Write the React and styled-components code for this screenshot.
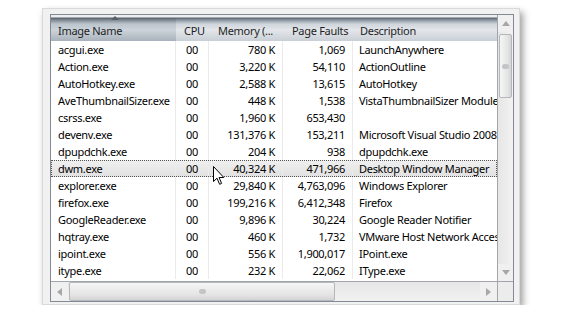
import React from 'react';
import styled, { createGlobalStyle } from 'styled-components';

const GlobalStyle = createGlobalStyle`
  html, body {
    margin: 0;
    background: #ffffff;
  }
  body {
    font-family: "Noto Sans", "Open Sans", sans-serif;
    font-size: 11px;
    letter-spacing: -0.3px;
    color: #000;
  }
`;

const columns = [
  { key: 'name', title: 'Image Name', width: 125, align: 'left', sorted: true },
  { key: 'cpu', title: 'CPU', width: 33, align: 'center' },
  { key: 'mem', title: 'Memory (...', width: 74, align: 'right' },
  { key: 'faults', title: 'Page Faults', width: 70, align: 'right' },
  { key: 'desc', title: 'Description', width: 144, align: 'left' },
];

const rows = [
  ['acgui.exe', '00', '780 K', '1,069', 'LaunchAnywhere'],
  ['Action.exe', '00', '3,220 K', '54,110', 'ActionOutline'],
  ['AutoHotkey.exe', '00', '2,588 K', '13,615', 'AutoHotkey'],
  ['AveThumbnailSizer.exe', '00', '448 K', '1,538', 'VistaThumbnailSizer Module'],
  ['csrss.exe', '00', '1,960 K', '653,430', ''],
  ['devenv.exe', '00', '131,376 K', '153,211', 'Microsoft Visual Studio 2008'],
  ['dpupdchk.exe', '00', '204 K', '938', 'dpupdchk.exe'],
  ['dwm.exe', '00', '40,324 K', '471,966', 'Desktop Window Manager'],
  ['explorer.exe', '00', '29,840 K', '4,763,096', 'Windows Explorer'],
  ['firefox.exe', '00', '199,216 K', '6,412,348', 'Firefox'],
  ['GoogleReader.exe', '00', '9,896 K', '30,224', 'Google Reader Notifier'],
  ['hqtray.exe', '00', '460 K', '1,732', 'VMware Host Network Access'],
  ['ipoint.exe', '00', '556 K', '1,900,017', 'IPoint.exe'],
  ['itype.exe', '00', '232 K', '22,062', 'IType.exe'],
];

const gridCols = columns.map((c) => `${c.width}px`).join(' ');

const App = () => {
  return (
    <>
      <GlobalStyle />
      <Page>
        <Frame>
          <ListView>
            <Table>
              <HeaderRow>
                {columns.map((col) => (
                  <HeaderCell key={col.key} $sorted={col.sorted} $align={col.align}>
                    {col.sorted && <SortArrow />}
                    {col.title}
                  </HeaderCell>
                ))}
              </HeaderRow>
              <Body>
                {rows.map((row, i) => (
                  <Row key={row[0]} $selected={i === 7}>
                    {row.map((val, j) => (
                      <Cell key={j} $align={columns[j].align}>
                        {val}
                      </Cell>
                    ))}
                  </Row>
                ))}
                <Pointer viewBox="0 0 12 19" width="12" height="19">
                  <path
                    d="M0.5 0.5 L0.5 15.5 L4 12.2 L6.6 18.3 L8.6 17.4 L6.1 11.5 L10.8 11.5 Z"
                    fill="#fff"
                    stroke="#000"
                    strokeWidth="1"
                    strokeLinejoin="miter"
                  />
                </Pointer>
              </Body>
            </Table>

            <VScroll>
              <ScrollButton $v>
                <Arrow dir="up" />
              </ScrollButton>
              <VTrack>
                <VThumb>
                  <Grip />
                </VThumb>
              </VTrack>
              <ScrollButton $v>
                <Arrow dir="down" />
              </ScrollButton>
            </VScroll>

            <HScroll>
              <ScrollButton>
                <Arrow dir="left" />
              </ScrollButton>
              <HTrack>
                <HThumb>
                  <Grip />
                </HThumb>
              </HTrack>
              <ScrollButton>
                <Arrow dir="right" />
              </ScrollButton>
            </HScroll>
            <Corner />
          </ListView>
        </Frame>
      </Page>
    </>
  );
};

const Arrow = ({ dir }) => {
  const points = {
    up: '0,5 4,0 8,5',
    down: '0,0 8,0 4,5',
    left: '5,0 5,8 0,4',
    right: '0,0 0,8 5,4',
  }[dir];
  const vertical = dir === 'up' || dir === 'down';
  return (
    <svg width={vertical ? 8 : 5} height={vertical ? 5 : 8}>
      <polygon points={points} fill="#a7a7a7" />
    </svg>
  );
};

const Page = styled.div`
  padding: 8px 0 0 42px;
`;

const Frame = styled.div`
  width: 478px;
  height: 297px;
  box-sizing: border-box;
  background: #f1f1f1;
  border: 1px solid #d9d9d9;
  padding: 5px 5px 2px 7px;
  box-shadow: 3px 4px 7px rgba(0, 0, 0, 0.38);
`;

const ListView = styled.div`
  display: grid;
  grid-template-columns: 446px 16px;
  grid-template-rows: 266px 20px;
  border: 1px solid #838a93;
  background: #fff;
  overflow: hidden;
`;

const Table = styled.div`
  display: flex;
  flex-direction: column;
  overflow: hidden;
`;

const HeaderRow = styled.div`
  display: grid;
  grid-template-columns: ${gridCols};
  height: 26px;
  flex: none;
`;

const HeaderCell = styled.div`
  position: relative;
  display: flex;
  align-items: center;
  padding: 4px 0 0 ${(p) => (p.$align === 'center' ? 8 : p.$sorted ? 7 : 9)}px;
  white-space: nowrap;
  overflow: hidden;
  color: #1e1e1e;
  background: ${(p) =>
    p.$sorted
      ? 'linear-gradient(#eceef0 0px, #eceef0 2px, #58616b 3px, #7f8993 5px, #bcc4cc 9px, #ccd3da 15px, #a9b2bc 26px)'
      : 'linear-gradient(#eceef0 0px, #eceef0 2px, #5c6670 3px, #8a939d 5px, #cfd5db 9px, #e3e6ea 15px, #c9cfd6 26px)'};
  &:last-child {
    padding-left: 7px;
  }
`;

const SortArrow = styled.span`
  position: absolute;
  top: 1px;
  left: 60px;
  width: 0;
  height: 0;
  border-left: 4px solid transparent;
  border-right: 4px solid transparent;
  border-bottom: 4px solid #5a5f66;
`;

const Body = styled.div`
  position: relative;
  flex: 1;
`;

const Row = styled.div`
  display: grid;
  grid-template-columns: ${gridCols};
  height: 17px;
  box-sizing: border-box;
  background: ${(p) => (p.$selected ? 'linear-gradient(#f0f0f0, #e1e1e1)' : 'transparent')};
  outline: ${(p) => (p.$selected ? '1px dotted #555' : 'none')};
  outline-offset: -1px;
`;

const Cell = styled.div`
  padding: 0 7px;
  line-height: 17px;
  white-space: nowrap;
  overflow: hidden;
  text-align: ${(p) => p.$align};
  border-right: 1px solid #ebebeb;
  &:last-child {
    border-right: none;
    padding: 0 0 0 6px;
  }
`;

const Pointer = styled.svg`
  position: absolute;
  left: 162px;
  top: 125px;
`;

const VScroll = styled.div`
  grid-row: 1;
  grid-column: 2;
  display: flex;
  flex-direction: column;
  background: #ececec;
  border-left: 1px solid #a2a6ab;
`;

const HScroll = styled.div`
  grid-row: 2;
  grid-column: 1;
  display: flex;
  background: #ececec;
  border-top: 1px solid #a2a6ab;
`;

const ScrollButton = styled.div`
  flex: none;
  display: flex;
  align-items: center;
  justify-content: center;
  width: ${(p) => (p.$v ? 'auto' : '17px')};
  height: ${(p) => (p.$v ? '17px' : 'auto')};
  background: #f0f0f0;
`;

const VTrack = styled.div`
  flex: 1;
  padding: 2px 0;
  background: linear-gradient(to right, #e6e6e6, #f2f2f2);
`;

const HTrack = styled.div`
  flex: 1;
  padding: 0 1px;
  background: linear-gradient(#e6e6e6, #f2f2f2);
`;

const VThumb = styled.div`
  height: 64px;
  margin: 0 1px;
  box-sizing: border-box;
  border: 1px solid #b3b7bc;
  border-radius: 2px;
  background: linear-gradient(to right, #f6f6f6, #e4e4e4 70%, #d4d4d4);
  display: flex;
  align-items: center;
  justify-content: center;
`;

const HThumb = styled.div`
  width: 266px;
  height: 100%;
  box-sizing: border-box;
  border: 1px solid #b3b7bc;
  border-radius: 2px;
  background: linear-gradient(#f6f6f6, #e4e4e4 70%, #d4d4d4);
  display: flex;
  align-items: center;
  justify-content: center;
`;

const Grip = styled.span`
  width: 7px;
  height: 5px;
  border-radius: 3px;
  background: #c2c4c6;
`;

const Corner = styled.div`
  grid-row: 2;
  grid-column: 2;
  background: #ececec;
  border-top: 1px solid #a2a6ab;
  border-left: 1px solid #a2a6ab;
`;

export default App;
